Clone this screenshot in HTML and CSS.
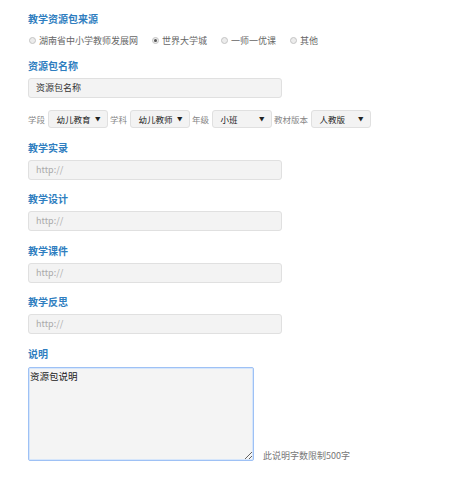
FILE: index.html
```html
<!DOCTYPE html>
<html lang="zh-CN">
<head>
<meta charset="utf-8">
<title>资源包</title>
<link rel="stylesheet" href="styles.css">
</head>
<body>
<div class="form">
  <div class="label">教学资源包来源</div>
  <div class="radios">
    <span class="radio"><span class="dot"></span>湖南省中小学教师发展网</span>
    <span class="radio"><span class="dot checked"></span>世界大学城</span>
    <span class="radio"><span class="dot"></span>一师一优课</span>
    <span class="radio"><span class="dot"></span>其他</span>
  </div>
  <div class="label mt12">资源包名称</div>
  <div class="input filled">资源包名称</div>
  <div class="selects">
    <span class="sel-label">学段</span>
    <span class="select"><span>幼儿教育</span><span class="arrow">▼</span></span>
    <span class="sel-label">学科</span>
    <span class="select"><span>幼儿教师</span><span class="arrow">▼</span></span>
    <span class="sel-label">年级</span>
    <span class="select"><span>小班</span><span class="arrow">▼</span></span>
    <span class="sel-label">教材版本</span>
    <span class="select"><span>人教版</span><span class="arrow">▼</span></span>
  </div>
  <div class="field">
    <div class="label">教学实录</div>
    <div class="input">http://</div>
  </div>
  <div class="field">
    <div class="label">教学设计</div>
    <div class="input">http://</div>
  </div>
  <div class="field">
    <div class="label">教学课件</div>
    <div class="input">http://</div>
  </div>
  <div class="field">
    <div class="label">教学反思</div>
    <div class="input">http://</div>
  </div>
  <div class="field">
    <div class="label">说明</div>
    <div class="desc-row">
      <textarea class="textarea">资源包说明</textarea>
      <span class="hint">此说明字数限制500字</span>
    </div>
  </div>
</div>
</body>
</html>
```
FILE: styles.css
```css
html, body {
  margin: 0;
  padding: 0;
  background: #fff;
}
body {
  font-family: "Noto Sans CJK SC", "Noto Sans", sans-serif;
  color: #333;
}
.form {
  padding: 12px 0 0 28px;
}
.label {
  font-size: 10px;
  line-height: 14px;
  height: 14px;
  font-weight: bold;
  color: #2f7ec0;
}
.mt12 {
  margin-top: 12px;
}
.radios {
  display: flex;
  align-items: center;
  gap: 13px;
  margin-top: 7px;
  height: 14px;
  font-size: 9px;
  color: #666;
}
.radio {
  display: flex;
  align-items: center;
  gap: 3px;
  white-space: nowrap;
}
.dot {
  width: 5px;
  height: 5px;
  border-radius: 50%;
  border: 1px solid #c4c4c4;
  background: #ececec;
  position: relative;
  margin-left: 1px;
}
.dot.checked::after {
  content: "";
  position: absolute;
  left: 1px;
  top: 1px;
  width: 3px;
  height: 3px;
  border-radius: 50%;
  background: #555;
}
.input {
  box-sizing: border-box;
  width: 254px;
  height: 20px;
  margin-top: 5px;
  border: 1px solid #e0e0e0;
  border-radius: 3px;
  background: #f3f3f3;
  font-size: 9px;
  line-height: 18px;
  padding-left: 7px;
  color: #aaa;
}
.input.filled {
  color: #333;
}
.selects {
  display: flex;
  align-items: center;
  gap: 2.5px;
  margin-top: 12px;
  height: 18px;
}
.sel-label {
  font-size: 8.5px;
  color: #888;
  white-space: nowrap;
}
.select {
  box-sizing: border-box;
  width: 60px;
  height: 18px;
  display: flex;
  align-items: center;
  justify-content: space-between;
  padding: 0 6px 0 8px;
  border: 1px solid #e0e0e0;
  border-radius: 3px;
  background: #f3f3f3;
  font-size: 8.5px;
  color: #222;
  white-space: nowrap;
}
.arrow {
  font-size: 5.5px;
  color: #222;
}
.field {
  margin-top: 12.5px;
}
.desc-row {
  display: flex;
  align-items: flex-end;
  gap: 9px;
  margin-top: 6px;
}
.textarea {
  box-sizing: border-box;
  width: 226px;
  height: 94px;
  margin: 0;
  padding: 2px 1px;
  border: 1px solid #9ec1f5;
  border-radius: 2px;
  background: #f4f4f4;
  font-family: "Noto Sans CJK SC", "Noto Sans", sans-serif;
  font-size: 9.5px;
  line-height: 12px;
  color: #222;
  outline: none;
  box-shadow: inset 0 0 0 1px #d6e6fb;
}
.hint {
  font-size: 9px;
  color: #777;
  line-height: 12px;
  margin-bottom: -1px;
}
```
